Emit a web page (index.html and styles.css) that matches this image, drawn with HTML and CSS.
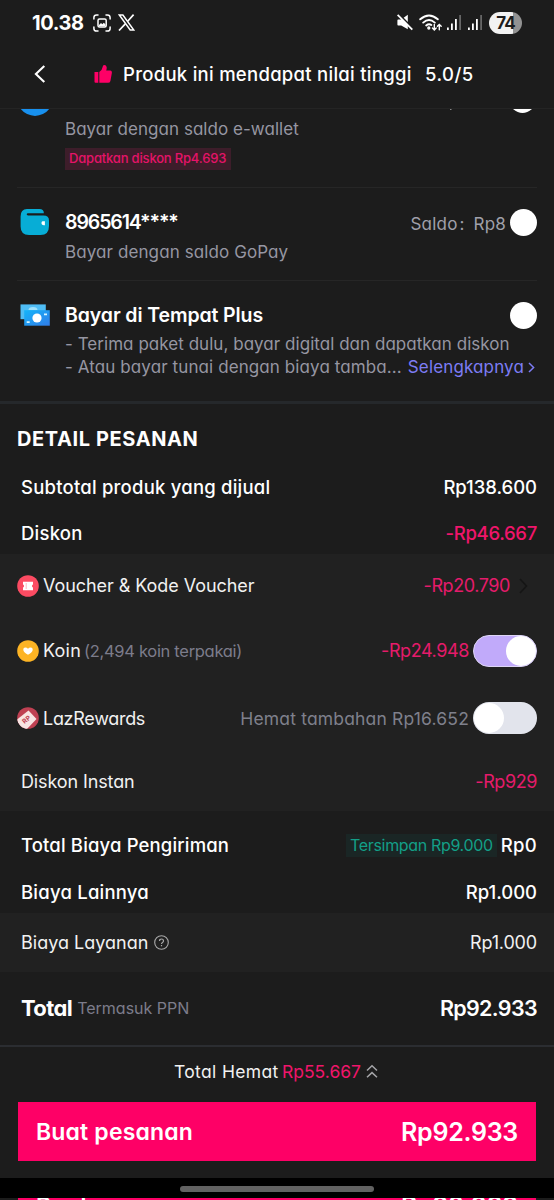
FILE: index.html
```html
<!DOCTYPE html>
<html lang="id">
<head>
<meta charset="utf-8">
<title>Checkout</title>
<link rel="stylesheet" href="styles.css">
</head>
<body>
<div class="screen">
  <header class="header">
    <div class="status">
      <span class="clock">10.38</span>
      <svg class="ic-shot" width="18" height="18" viewBox="0 0 18 18" fill="none" stroke="#fff" stroke-width="1.5" stroke-linecap="round"><path d="M.9 5V3.6A2.7 2.7 0 0 1 3.6.9H5M13 .9h1.4a2.7 2.7 0 0 1 2.7 2.7V5M17.100 13v1.400a2.700 2.700 0 0 1-2.700 2.700H13M5 17.100H3.600A2.700 2.700 0 0 1 .9 14.400V13"/><rect x="5" y="5" width="8.200" height="8" rx="1.500"/><path d="M6 12.200V11l2-2 1.300 1.300 1.500-1.500 1.700 1.700v1.700z" fill="#fff" stroke="none"/></svg>
      <svg class="ic-x" width="17" height="17" viewBox="0 0 17 17" fill="none" stroke="#fff"><path d="M1.300 1h3.600l10.900 15h-3.600z" stroke-width="1.500"/><path d="M15.600.6 9.700 7.200M7.300 9.800 1 16.500" stroke-width="1.700"/></svg>
      <span class="grow"></span>
      <svg class="ic-mute" width="17" height="17" viewBox="0 0 17 17"><path d="M1.200 5.500h3L10.800.8v14.500L4.200 11.500h-3q-.8 0-.8-.9V6.400q0-.9.8-.9z" fill="#fff"/><path d="M1.500-.3 16.500 15" stroke="#1c1c1c" stroke-width="1.800"/><path d="M.6.900 15.300 15.700" stroke="#fff" stroke-width="1.800"/></svg>
      <svg class="ic-wifi" width="24" height="18" viewBox="0 0 24 18" fill="none" stroke="#fff" stroke-width="1.900" stroke-linecap="round"><path d="M1.200 5.300Q10-2.400 18.800 5.300M4.200 8.600Q10 3.500 15.800 8.600M7.200 11.400Q10 9.200 12.300 11"/><circle cx="9.800" cy="14" r=".7" fill="#fff"/><path d="M15.300 10.500v5.200m-1.900-1.700 1.900 1.900 1.900-1.900M20.300 15.700v-5.200m-1.900 1.800 1.900-1.900 1.900 1.900" stroke-width="1.400"/></svg>
      <svg class="ic-sig" width="15" height="16" viewBox="0 0 15 16"><path d="M0 12.500h1.800V15H0zM4 8.500h1.800V15H4zM8 4h1.800v11H8z" fill="#fff"/><path d="M12.200 0H14v15h-1.800z" fill="#666"/></svg>
      <svg class="ic-sig2" width="15" height="16" viewBox="0 0 15 16"><path d="M0 12.500h1.800V15H0zM4 8.500h1.800V15H4zM8 4h1.800v11H8z" fill="#fff"/><path d="M12.200 0H14v15h-1.800z" fill="#666"/></svg>
      <span class="battery">74</span>
    </div>
    <div class="titlebar">
      <svg class="ic-back" width="12" height="18" viewBox="0 0 12 18" fill="none" stroke="#fff" stroke-width="2.100"><path d="M10.300.900 1.900 9l8.400 8.100"/></svg>
      <svg class="ic-thumb" width="18" height="18" viewBox="0 0 18 18" fill="#fe0066"><path d="M.5 7h3.800v10.800H1.500q-1 0-1-1zM5.300 7q3-2 3.400-5.200.1-1.600 1.500-1.800 2.200 0 2.500 2.300.1 1.600-.5 3.300h4q1.900.2 1.700 2.200l-1.500 8.100q-.5 1.900-2.300 1.900H5.300z"/></svg>
      <span class="title">Produk ini mendapat nilai tinggi</span>
      <span class="score">5.0/5</span>
    </div>
  </header>

  <main>
    <section class="pay ewallet">
      <div class="pay-icon"><svg width="30" height="9" viewBox="0 0 30 9"><path d="M.8 0h28.400A18 18 0 0 1 .8 0z" fill="#1890ee"/></svg></div>
      <div class="pay-body">
        <div class="desc l128">Bayar dengan saldo e-wallet</div>
        <span class="tag">Dapatkan diskon Rp4.693</span>
      </div>
      <svg class="saldo-tip" width="2" height="2"><path d="M0 0h1.500v1H0z" fill="#888"/></svg>
      <svg class="radio-cut" width="19" height="4" viewBox="0 0 19 4"><path d="M0 0h19Q9.500 8 0 0z" fill="#fff"/></svg>
    </section>

    <section class="pay gopay">
      <div class="pay-icon"><svg width="30" height="28" viewBox="0 0 30 28"><path d="M7 1h12.500q4.200 0 4.400 4.200L8 5.200q-1.300 0-1.300 1.100T8 7.400h15.500q5.500 0 5.500 5v5.500Q29 27 20.500 27H9Q.6 27 .6 18.500V8.500Q.6 1 7 1z" fill="#07add6"/><path d="M22.500 13.300h2.400v4h-1q-2.600-.2-2.400-2.600.1-1.200 1-1.400z" fill="#fff"/></svg></div>
      <div class="pay-body">
        <div class="name phone">8965614****</div>
        <div class="desc l252">Bayar dengan saldo GoPay</div>
      </div>
      <div class="balance"><span>Saldo</span><span class="colon">:</span><span class="amt">Rp8</span></div>
      <i class="radio"></i>
    </section>

    <section class="pay cod">
      <div class="pay-icon"><svg width="30" height="22" viewBox="0 0 30 22"><defs><linearGradient id="note" x2="1" y2="1"><stop stop-color="#14b5fa"/><stop offset="1" stop-color="#317ce8"/></linearGradient></defs><path d="M.5.400h25.300v14.800H.5z" fill="#4fbdf5"/><path d="M8.500 6q0-3.100 4.500-3.100t4.500 3.100z" fill="#9fe1fc"/><path d="M4.200 6.200h25.600v15.500H4.200z" fill="url(#note)"/><circle cx="17" cy="14" r="4.600" fill="#fff"/><path d="M24 9.500h3v1.800h-3zM6.700 17.200h3V19h-3z" fill="#d5f4ff"/></svg></div>
      <div class="pay-body">
        <div class="name plus">Bayar di Tempat Plus</div>
        <div class="desc line1">- Terima paket dulu, bayar digital dan dapatkan diskon</div>
        <div class="desc line2"><span>- Atau bayar tunai dengan biaya tamba...</span><a class="more">Selengkapnya</a><svg width="7" height="11" viewBox="0 0 7 11" fill="none" stroke="#7d7cf5" stroke-width="1.500"><path d="m1 1 4.600 4.500L1 10"/></svg></div>
      </div>
      <i class="radio"></i>
    </section>

    <section class="detail">
      <h2>DETAIL PESANAN</h2>
      <div class="row strong first"><span>Subtotal produk yang dijual</span><span class="n0">Rp138.600</span></div>
      <div class="row strong second"><span>Diskon</span><span class="pink n24">-Rp46.667</span></div>

      <div class="group savings">
        <div class="row voucher">
          <svg class="bullet" width="22" height="22" viewBox="0 0 22 22"><circle cx="11" cy="11" r="10.800" fill="#fb4b62"/><path d="M6 6.800h10v2.800q-1 .2-1 1.400t1 1.400v2.800H6v-2.800q1-.2 1-1.400T6 9.600z" fill="#fff"/><path d="M9.200 8.500v1m0 1v1m0 1v1" stroke="#fb4b62" stroke-width=".8"/></svg>
          <span class="label">Voucher &amp; Kode Voucher</span>
          <span class="pink n36">-Rp20.790</span>
          <svg class="chev" width="9" height="16" viewBox="0 0 9 16" fill="none" stroke="#151515" stroke-width="1.600"><path d="m1 1 6.500 7L1 15"/></svg>
        </div>
        <div class="row coin">
          <svg class="bullet" width="22" height="22" viewBox="0 0 22 22"><circle cx="11" cy="11" r="10.800" fill="#fdb424"/><path d="M8.200 7.500q1.700 0 2.800 1.300 1.100-1.300 2.800-1.300 1.900.1 1.900 2 0 2.900-4.700 5.300-4.700-2.400-4.700-5.300 0-1.900 1.900-2z" fill="#fff"/></svg>
          <span class="label">Koin</span><span class="used">(2,494 koin terpakai)</span>
          <span class="pink n40">-Rp24.948</span>
          <span class="switch on"><i></i></span>
        </div>
        <div class="row laz">
          <svg class="bullet" width="22" height="22" viewBox="0 0 22 22"><defs><clipPath id="disc"><circle cx="11" cy="11" r="10.800"/></clipPath></defs><g clip-path="url(#disc)"><path d="M0 0h22v22H0z" fill="#bf4052"/><path d="m11.500 3.500 8 8.500-9.500 10H4L-.5 13z" fill="#f8e4e3"/></g><text class="rp" x="9.200" y="14.900" text-anchor="middle" transform="rotate(-40 9.200 12.300)">RP</text></svg>
          <span class="label">LazRewards</span>
          <span class="extra">Hemat tambahan Rp16.652</span>
          <span class="switch"><i></i></span>
        </div>
        <div class="row instant"><span class="label">Diskon Instan</span><span class="pink n36">-Rp929</span></div>
      </div>

      <div class="row strong ship"><span>Total Biaya Pengiriman</span><span class="saved">Tersimpan Rp9.000</span><span class="n54">Rp0</span></div>
      <div class="row strong other"><span>Biaya Lainnya</span><span class="n0">Rp1.000</span></div>

      <div class="group fees">
        <div class="row service"><span class="label">Biaya Layanan</span>
          <svg class="help" width="15" height="15" viewBox="0 0 15 15" fill="none" stroke="#a8a8a8"><circle cx="7.500" cy="7.500" r="6.800" stroke-width="1.100"/><path d="M5.500 6.100Q5.500 4 7.500 4t2 1.900q0 .9-1 1.500-1 .6-1 1.500M7.500 10v1.300" stroke-width="1.200"/></svg>
          <span class="n16">Rp1.000</span></div>
      </div>

      <div class="row total"><b>Total</b><span class="tax">Termasuk PPN</span><span class="sum">Rp92.933</span></div>
    </section>
  </main>

  <footer class="footer">
    <div class="saving"><span class="th">Total Hemat</span><span class="pink">Rp55.667</span><svg width="12" height="15" viewBox="0 0 12 15" fill="none" stroke="#a5a5a8" stroke-width="1.500"><path d="m1 6.500 5-4.700 5 4.700M1 13.300l5-4.700 5 4.700"/></svg></div>
    <button class="order"><span>Buat pesanan</span><span class="price">Rp92.933</span></button>
  </footer>
  <div class="navbar"><i></i></div>
  <div class="peek"><div class="order ghost"><span>Buat pesanan</span><span class="price">Rp92.933</span></div></div>
</div>
</body>
</html>
```

FILE: styles.css
```css
* { box-sizing: border-box; }
body {
  margin: 0;
  background: #1c1c1c;
  color: #fff;
  font-family: Inter, "Noto Sans", sans-serif;
  font-feature-settings: "cv11";
}
svg { display: block; flex: none; }
.screen { width: 554px; height: 1200px; overflow: hidden; background: #1c1c1c; white-space: nowrap; }
.grow { flex: 1; }
.pink { color: #f0156b; }

.header { height: 109px; border-bottom: 1px solid #242424; }
.status { display: flex; align-items: center; height: 45px; padding: 0 32px; }
.clock { font-size: 20px; font-weight: 700; letter-spacing: -.4px; width: 61px; }
.ic-x { margin-left: 7px; }
.ic-wifi { margin-left: 5px; }
.ic-sig { margin-left: 4px; }
.ic-sig2 { margin-left: 6px; }
.battery {
  display: flex; align-items: center; justify-content: center;
  width: 33px; height: 22px; margin-left: 6px; border-radius: 11px;
  background: linear-gradient(90deg, #f2f2f2 74%, #929292 74%);
  color: #1c1c1c; font-size: 17px; font-weight: 700; letter-spacing: -1px;
}
.titlebar { display: flex; align-items: center; height: 57px; padding-left: 34px; font-size: 18.5px; font-weight: 500; }
.ic-thumb { margin-left: 48px; }
.title { width: 302px; margin-left: 11px; letter-spacing: .28px; }
.score { letter-spacing: .5px; }

.pay { display: flex; margin: 0 17px; border-bottom: 1px solid #262626; }
.pay-icon { width: 48px; padding-left: 3px; }
.pay-body { flex: 1; }
.desc { font-size: 17px; line-height: 22px; letter-spacing: .1px; color: #9696a2; }
.name { font-size: 19.5px; line-height: 26px; font-weight: 600; }
.ewallet { height: 79px; }
.l128 { margin-top: 9px; letter-spacing: .04px; }
.tag {
  display: block; width: 166px; height: 22px; margin-top: 8px; padding-left: 4px;
  background: #3d1d2a; color: #e51368; font-size: 13px; line-height: 21px; font-weight: 500; letter-spacing: -.18px;
}
.saldo-tip { margin-right: 61px; }
.radio-cut { margin-right: 5px; }
.gopay { height: 93px; }
.gopay .pay-icon { padding-top: 20px; }
.phone { margin-top: 21px; letter-spacing: -1.1px; }
.l252 { margin-top: 6px; }
.balance { display: flex; margin: 25px 4px 0 0; font-size: 17px; line-height: 22px; color: #a0a0aa; letter-spacing: .2px; }
.colon { width: 16px; padding-left: 2px; }
.radio { flex: none; width: 27px; height: 27px; border-radius: 50%; background: #fff; }
.gopay .radio { margin-top: 21px; }
.cod { height: 120px; border-bottom: 0; }
.cod .pay-icon { padding-top: 23px; }
.cod .pay-body { width: 0; }
.plus { margin-top: 21px; letter-spacing: -.1px; }
.line1 { margin-top: 5px; letter-spacing: .04px; }
.line2 { display: flex; align-items: center; line-height: 24px; }
.more { margin: 0 4px 0 6px; color: #7d7cf5; letter-spacing: .14px; }
.cod .radio { margin-top: 21px; }

.detail { border-top: 3px solid #25282b; }
h2 { margin: 0; padding: 22px 0 0 17px; font-size: 20px; line-height: 26px; font-weight: 700; letter-spacing: .6px; }
.row { display: flex; align-items: center; justify-content: space-between; padding: 0 17px 0 21px; font-size: 18px; }
.strong { height: 47px; font-size: 18.5px; font-weight: 500; letter-spacing: .22px; }
.first { height: 44px; margin-top: 13px; }
.second { height: 45px; padding-top: 2px; }
.n0 { letter-spacing: -.04px; }
.n24 { letter-spacing: -.3px; }
.n36 { letter-spacing: -.42px; }
.n40 { letter-spacing: -.4px; }
.n16 { letter-spacing: -.16px; }
.n54 { letter-spacing: .3px; }
.group { background: #212121; }
.group .row { color: #f1f1f1; }
.group .pink { color: #e51b6b; }
.savings { height: 257px; padding-top: 1px; }
.group .voucher, .group .coin, .group .laz { padding-left: 17px; }
.bullet { margin-right: 4px; }
.voucher { height: 61px; }
.voucher .label { flex: 1; letter-spacing: -.06px; }
.chev { margin: 0 9px; }
.coin { height: 69px; }
.coin .label { letter-spacing: .2px; }
.used { flex: 1; margin-left: 3px; font-size: 16.5px; letter-spacing: -.3px; color: #7c7c8b; }
.laz { height: 66px; }
.laz .label { flex: 1; letter-spacing: -.3px; }
.rp { font-size: 6.5px; font-weight: 700; fill: #bf4052; }
.extra { font-size: 17.5px; letter-spacing: .17px; color: #7f808c; }
.switch { flex: none; display: flex; width: 64px; height: 32px; margin-left: 4px; padding: 1px; border-radius: 16px; background: #e2e4ec; }
.switch i { width: 30px; height: 30px; border-radius: 50%; background: #fff; }
.on { justify-content: flex-end; border: 1px solid #ddd5f5; padding: 0; background: #c1aafa; }
.instant { height: 61px; }
.instant .label { letter-spacing: -.12px; }
.ship { height: 67px; letter-spacing: .15px; }
.saved {
  height: 23px; margin: 1px 4px 0 auto; padding: 0 4px; background: #1a2625; color: #139f87;
  font-size: 16px; line-height: 23px; font-weight: 400; letter-spacing: -.34px;
}
.other { height: 35px; padding-bottom: 8px; }
.fees, .service { height: 59px; }
.service .n16 { margin-left: auto; }
.help { margin-left: 6px; }
.total { height: 73px; padding-bottom: 1px; }
.total b { font-size: 22px; letter-spacing: -.6px; }
.tax { flex: 1; margin-left: 5px; font-size: 16px; color: #7c7c8b; }
.sum { font-size: 21.5px; font-weight: 600; letter-spacing: -.65px; }

.footer { height: 133px; border-top: 2px solid #2b2d31; padding: 0 18px; }
.saving { display: flex; align-items: center; height: 50px; margin-left: 156px; padding-bottom: 1px; font-size: 17.5px; }
.th { width: 108px; letter-spacing: .35px; color: #f1f1f1; }
.saving svg { margin-left: 5px; }
.order {
  display: flex; align-items: center; justify-content: space-between;
  width: 100%; height: 59px; margin-top: 5px; padding: 0 18px; border: 0; background: #fe0066; color: #fff;
  font: 600 23px Inter, sans-serif; font-feature-settings: "cv11"; letter-spacing: .17px;
}
.price { font-size: 25px; letter-spacing: -.25px; }
.navbar { display: flex; justify-content: center; height: 20px; padding-top: 8px; background: #000; }
.navbar i { width: 194px; height: 6px; border-radius: 3px; background: #626262; }
.peek { height: 2px; overflow: hidden; padding: 0 18px; }
.ghost { align-items: flex-start; height: 20px; margin: 0; line-height: 16px; }
.ghost .price { line-height: 16px; }
```
